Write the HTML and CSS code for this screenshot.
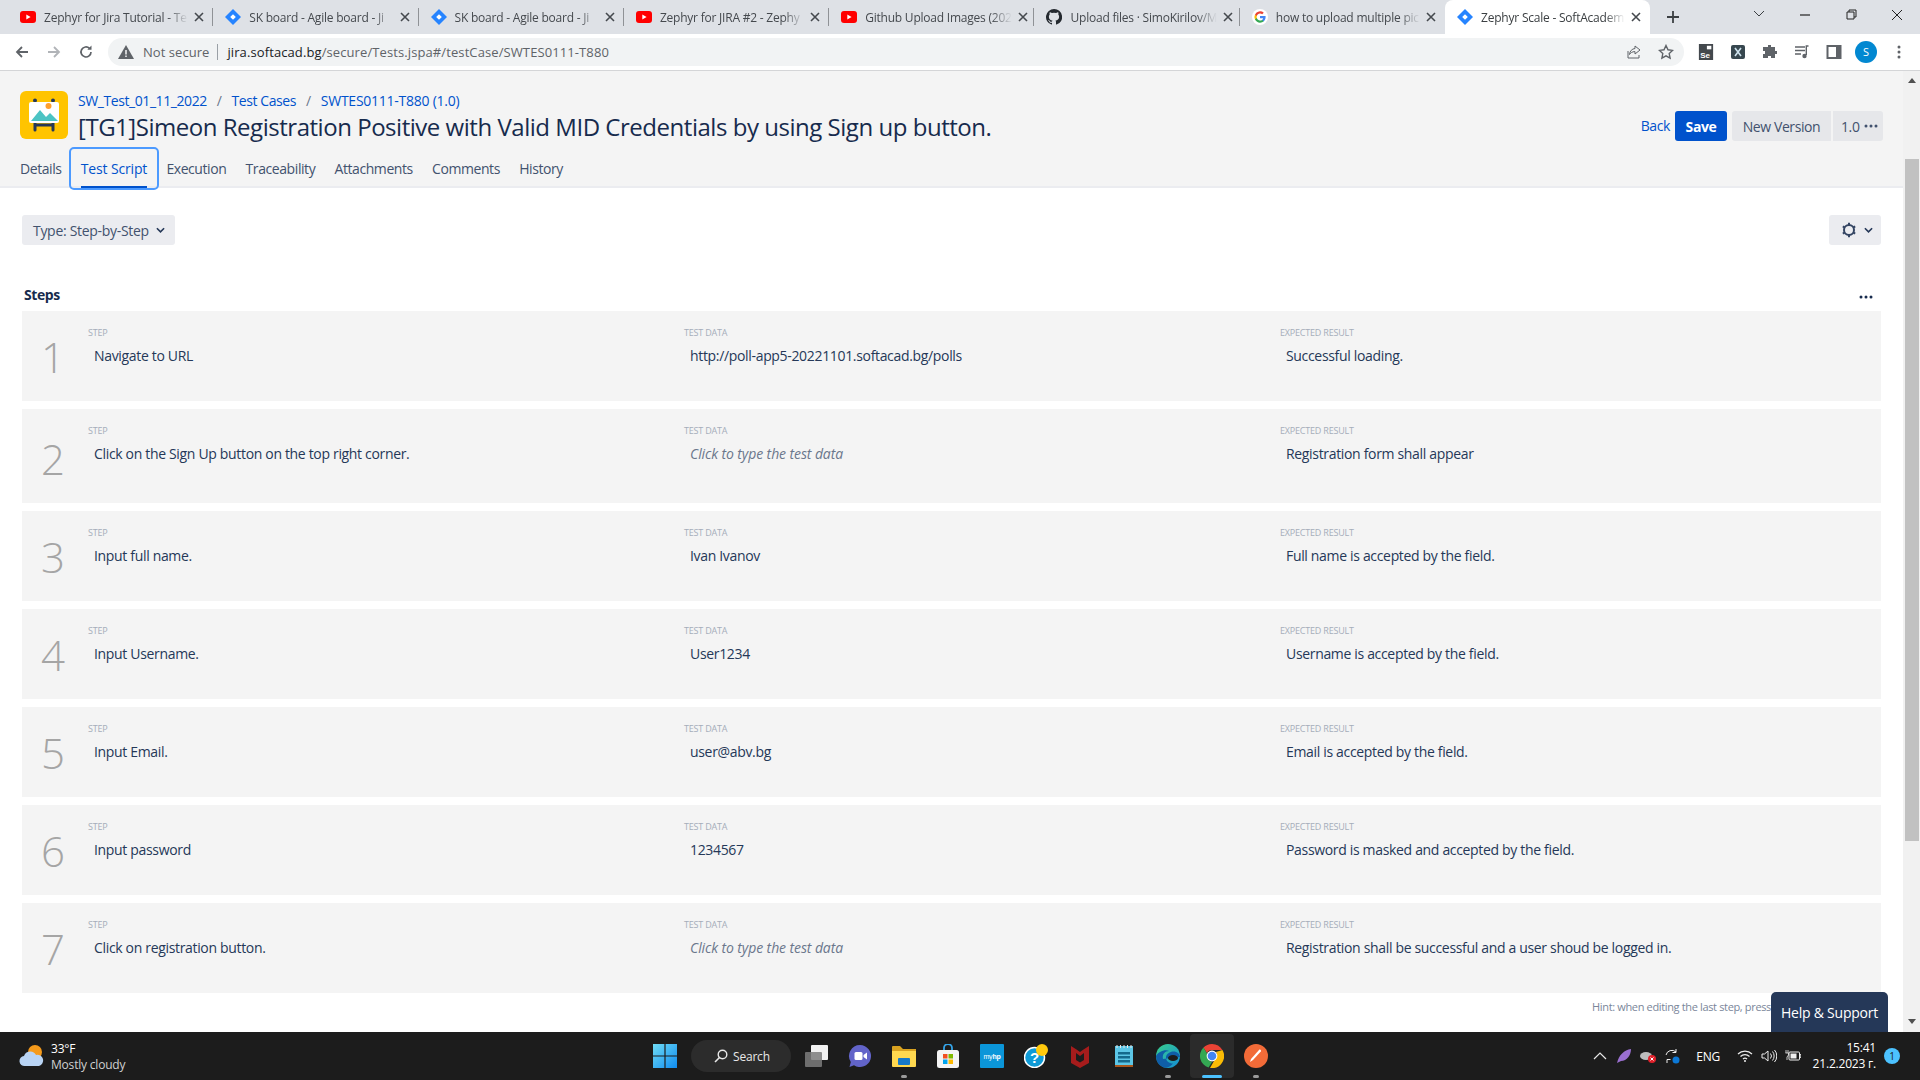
FILE: index.html
```html
<!DOCTYPE html>
<html lang="en">
<head>
<meta charset="utf-8">
<title>Zephyr Scale - SoftAcademy</title>
<link rel="stylesheet" href="styles.css">
</head>
<body>
<svg class="defs" width="0" height="0" aria-hidden="true">
  <symbol id="yt" viewBox="0 0 16 12"><rect width="16" height="12" rx="3" fill="#f00"/><path d="M6.3 3.4v5.2L10.6 6z" fill="#fff"/></symbol>
  <symbol id="jira" viewBox="0 0 16 16"><path d="M8 0l8 8-8 8-8-8z" fill="#2684ff"/><rect x="6" y="6" width="4" height="4" transform="rotate(45 8 8)" fill="#fff"/></symbol>
  <symbol id="close" viewBox="0 0 10 10"><path d="M1 1l8 8M9 1l-8 8" stroke="#45494e" stroke-width="1.6" fill="none"/></symbol>
  <symbol id="dots" viewBox="0 0 14 4"><circle cx="2" cy="2" r="1.500"/><circle cx="7" cy="2" r="1.500"/><circle cx="12" cy="2" r="1.500"/></symbol>
  <symbol id="gh" viewBox="0 0 16 16"><path fill="#24292f" d="M8 0a8 8 0 0 0-2.5 15.6c.4.1.5-.2.5-.4v-1.4c-2.2.5-2.7-1-2.7-1-.4-.9-.9-1.200-.9-1.200-.7-.5.100-.5.100-.5.800.1 1.200.8 1.200.8.700 1.200 1.900.9 2.300.7.100-.5.300-.9.500-1.100-1.800-.2-3.600-.9-3.600-4 0-.9.300-1.600.8-2.100-.1-.2-.4-1 .1-2.100 0 0 .7-.2 2.200.8a7.600 7.600 0 0 1 4 0c1.500-1 2.200-.8 2.200-.8.400 1.100.200 1.900.100 2.100.5.600.8 1.300.8 2.100 0 3.100-1.900 3.800-3.700 4 .3.300.6.800.6 1.500v2.200c0 .2.100.5.600.4A8 8 0 0 0 8 0z"/></symbol>
  <symbol id="goog" viewBox="0 0 16 16"><circle cx="8" cy="8" r="8" fill="#fff"/><path d="M13.600 8.100c0-.4 0-.8-.1-1.100H8v2.200h3.100c-.1.700-.5 1.300-1.100 1.700v1.400h1.900c1.100-1 1.700-2.500 1.700-4.200z" fill="#4285f4"/><path d="M8 13.700c1.500 0 2.800-.5 3.800-1.400L10 10.900c-.5.400-1.200.6-2 .6-1.500 0-2.700-1-3.200-2.400H3v1.400c1 1.900 2.900 3.200 5 3.200z" fill="#34a853"/><path d="M4.800 9.100c-.2-.7-.2-1.500 0-2.200V5.500H3a5.600 5.600 0 0 0 0 5z" fill="#fbbc05"/><path d="M8 4.500c.8 0 1.600.3 2.200.8l1.600-1.600A5.600 5.600 0 0 0 3 5.500l1.800 1.400C5.300 5.500 6.500 4.500 8 4.500z" fill="#ea4335"/></symbol>
</svg>

<div class="screen">
  <header class="tabstrip">
    <div class="tab sep"><svg class="fav"><use href="#yt"/></svg><span class="tab-title">Zephyr for Jira Tutorial - Te</span><svg class="tab-x"><use href="#close"/></svg></div>
    <div class="tab sep"><svg class="fav"><use href="#jira"/></svg><span class="tab-title">SK board - Agile board - Ji</span><svg class="tab-x"><use href="#close"/></svg></div>
    <div class="tab sep"><svg class="fav"><use href="#jira"/></svg><span class="tab-title">SK board - Agile board - Ji</span><svg class="tab-x"><use href="#close"/></svg></div>
    <div class="tab sep"><svg class="fav"><use href="#yt"/></svg><span class="tab-title">Zephyr for JIRA #2 - Zephy</span><svg class="tab-x"><use href="#close"/></svg></div>
    <div class="tab sep"><svg class="fav"><use href="#yt"/></svg><span class="tab-title">Github Upload Images (202</span><svg class="tab-x"><use href="#close"/></svg></div>
    <div class="tab sep"><svg class="fav"><use href="#gh"/></svg><span class="tab-title">Upload files · SimoKirilov/M</span><svg class="tab-x"><use href="#close"/></svg></div>
    <div class="tab"><svg class="fav"><use href="#goog"/></svg><span class="tab-title">how to upload multiple pic</span><svg class="tab-x"><use href="#close"/></svg></div>
    <div class="tab tab-active"><svg class="fav"><use href="#jira"/></svg><span class="tab-title">Zephyr Scale - SoftAcadem</span><svg class="tab-x"><use href="#close"/></svg></div>
    <svg class="newtab" viewBox="0 0 14 14"><path d="M7 1v12M1 7h12" stroke="#3c4043" stroke-width="1.800" fill="none"/></svg>
    <div class="winctl">
      <svg class="wc" viewBox="0 0 46 30"><path d="M18 11l5 5 5-5" stroke="#3c4043" fill="none"/></svg>
      <svg class="wc" viewBox="0 0 46 30"><path d="M18 15h10" stroke="#222" stroke-width="1.200" fill="none"/></svg>
      <svg class="wc" viewBox="0 0 46 30"><path d="M19 12h7v7h-7zM21 12v-2h7v7h-2" stroke="#222" fill="none"/></svg>
      <svg class="wc" viewBox="0 0 46 30"><path d="M18 10l10 10M28 10L18 20" stroke="#222" fill="none"/></svg>
    </div>
  </header>

  <nav class="toolbar">
    <svg class="nav-ic" viewBox="0 0 16 16"><path d="M14 8H3M8 3L3 8l5 5" stroke="#5f6368" stroke-width="1.800" fill="none"/></svg>
    <svg class="nav-ic" viewBox="0 0 16 16"><path d="M2 8h11M8 3l5 5-5 5" stroke="#b1b4b8" stroke-width="1.800" fill="none"/></svg>
    <svg class="nav-ic" viewBox="0 0 16 16"><path d="M13 8a5 5 0 1 1-1.500-3.600" stroke="#5f6368" stroke-width="1.700" fill="none"/><path d="M13.500 1.500v4.200H9.300z" fill="#5f6368"/></svg>
    <div class="omnibox">
      <svg class="warn" viewBox="0 0 16 14"><path d="M8 0l8 14H0z" fill="#5f6368"/><path d="M7.300 5h1.400v4.500H7.300zM7.300 10.500h1.400V12H7.300z" fill="#fff"/></svg>
      <span class="not-secure">Not secure</span>
      <span class="omni-sep"></span>
      <span class="url"><b>jira.softacad.bg</b>/secure/Tests.jspa#/testCase/SWTES0111-T880</span>
      <svg class="omni-ic" viewBox="0 0 16 16"><path d="M9 2l5 4-5 4V7.600C6 7.600 4.500 9 3.500 10.500 3.800 7 6 4.800 9 4.500zM2 7v7h11v-3" stroke="#5f6368" fill="none"/></svg>
      <svg class="omni-ic" viewBox="0 0 16 16"><path d="M8 1.500l2 4.300 4.600.6-3.400 3.200.9 4.600L8 11.900l-4.100 2.300.9-4.600L1.400 6.400 6 5.800z" stroke="#5f6368" stroke-width="1.400" fill="none"/></svg>
    </div>
    <div class="ext">
      <svg class="ext-ic" viewBox="0 0 16 18"><rect width="16" height="18" fill="#43484d"/><rect x="9" y="2" width="5" height="4" fill="#fff"/><text x="1.500" y="15.500" class="se">Se</text></svg>
      <svg class="ext-ic" viewBox="0 0 16 16"><rect x="1" y="1" width="14" height="14" rx="2" fill="#37474f"/><path d="M5 4l6 8M11 4l-6 8" stroke="#cfe3ee" stroke-width="1.600"/></svg>
      <svg class="ext-ic" viewBox="0 0 16 16"><path d="M6 1h3v2h4v4h2v3h-2v4H9v-2H6v2H1v-4h2V7H1V3h5z" fill="#5f6368"/></svg>
      <svg class="ext-ic" viewBox="0 0 16 16"><path d="M1 3h10M1 6.500h10M1 10h6" stroke="#5f6368" stroke-width="1.300"/><path d="M14.500 2h-2.200v9" stroke="#5f6368" stroke-width="1.400" fill="none"/><circle cx="10.500" cy="12" r="2.200" fill="#5f6368"/></svg>
      <svg class="ext-ic" viewBox="0 0 16 16"><path d="M1.500 2h13v12h-13z" fill="#fff" stroke="#5f6368" stroke-width="2"/><rect x="10" y="2" width="5" height="12" fill="#5f6368"/></svg>
      <span class="avatar">S</span>
      <svg class="ext-ic dots3" viewBox="0 0 4 16"><circle cx="2" cy="3" r="1.500" fill="#5f6368"/><circle cx="2" cy="8" r="1.500" fill="#5f6368"/><circle cx="2" cy="13" r="1.500" fill="#5f6368"/></svg>
    </div>
  </nav>

  <div class="viewport">
    <main class="app">
      <section class="page-head">
        <div class="head-top">
          <svg class="logo" viewBox="0 0 48 48">
            <rect width="48" height="48" rx="6" fill="#ffc400"/>
            <path d="M15 39V12M33 39V12" stroke="#253858" stroke-width="3" stroke-linecap="round"/>
            <path d="M15 34h18" stroke="#253858" stroke-width="3"/>
            <circle cx="15" cy="9.500" r="2" fill="#253858"/><circle cx="33" cy="9.500" r="2" fill="#253858"/>
            <rect x="9" y="11" width="30" height="21" rx="2" fill="#fff"/>
            <path d="M11 30l9-11 6 7 4-4 8 8z" fill="#4cc4c4"/>
            <circle cx="28.500" cy="15" r="3" fill="#ff9f2e"/>
          </svg>
          <div class="titles">
            <div class="crumbs"><a>SW_Test_01_11_2022</a><i>/</i><a>Test Cases</a><i>/</i><a class="crumb-key">SWTES0111-T880 (1.0)</a></div>
            <h1>[TG1]Simeon Registration Positive with Valid MID Credentials by using Sign up button.</h1>
          </div>
          <div class="actions">
            <a class="back">Back</a>
            <button class="btn btn-primary">Save</button>
            <button class="btn btn-version">New Version</button>
            <button class="btn btn-more">1.0 <svg class="dots-ic"><use href="#dots"/></svg></button>
          </div>
        </div>
        <div class="page-tabs">
          <a class="ptab">Details</a>
          <a class="ptab ptab-on">Test Script</a>
          <a class="ptab">Execution</a>
          <a class="ptab">Traceability</a>
          <a class="ptab">Attachments</a>
          <a class="ptab">Comments</a>
          <a class="ptab">History</a>
        </div>
      </section>

      <section class="content">
        <div class="type-row">
          <button class="btn btn-type">Type: Step-by-Step <svg class="chev" viewBox="0 0 10 6"><path d="M1 1l4 4 4-4" stroke="#253858" stroke-width="1.800" fill="none"/></svg></button>
          <button class="btn btn-gear">
            <svg class="gear" viewBox="0 0 16 16"><circle cx="8" cy="8" r="5" stroke="#344563" stroke-width="2" fill="none"/><path d="M8 .8v2.400M8 12.800v2.400M1.800 4.400l2 1.200M12.200 10.400l2 1.200M1.800 11.600l2-1.200M12.200 5.600l2-1.200" stroke="#344563" stroke-width="2"/></svg>
            <svg class="chev" viewBox="0 0 10 6"><path d="M1 1l4 4 4-4" stroke="#253858" stroke-width="1.800" fill="none"/></svg>
          </button>
        </div>
        <div class="steps-head"><h2>Steps</h2><svg class="dots-ic steps-dots"><use href="#dots"/></svg></div>
        <div class="steps">
          <article class="step">
            <div class="num">1</div>
            <div class="cell"><div class="lbl">Step</div><div class="val">Navigate to URL</div></div>
            <div class="cell"><div class="lbl">Test data</div><div class="val">http://poll-app5-20221101.softacad.bg/polls</div></div>
            <div class="cell"><div class="lbl">Expected result</div><div class="val">Successful loading.</div></div>
          </article>
          <article class="step step-tall">
            <div class="num">2</div>
            <div class="cell"><div class="lbl">Step</div><div class="val">Click on the Sign Up button on the top right corner.</div></div>
            <div class="cell"><div class="lbl">Test data</div><div class="val ph">Click to type the test data</div></div>
            <div class="cell"><div class="lbl">Expected result</div><div class="val">Registration form shall appear</div></div>
          </article>
          <article class="step">
            <div class="num">3</div>
            <div class="cell"><div class="lbl">Step</div><div class="val">Input full name.</div></div>
            <div class="cell"><div class="lbl">Test data</div><div class="val">Ivan Ivanov</div></div>
            <div class="cell"><div class="lbl">Expected result</div><div class="val">Full name is accepted by the field.</div></div>
          </article>
          <article class="step">
            <div class="num">4</div>
            <div class="cell"><div class="lbl">Step</div><div class="val">Input Username.</div></div>
            <div class="cell"><div class="lbl">Test data</div><div class="val">User1234</div></div>
            <div class="cell"><div class="lbl">Expected result</div><div class="val">Username is accepted by the field.</div></div>
          </article>
          <article class="step">
            <div class="num">5</div>
            <div class="cell"><div class="lbl">Step</div><div class="val">Input Email.</div></div>
            <div class="cell"><div class="lbl">Test data</div><div class="val">user@abv.bg</div></div>
            <div class="cell"><div class="lbl">Expected result</div><div class="val">Email is accepted by the field.</div></div>
          </article>
          <article class="step">
            <div class="num">6</div>
            <div class="cell"><div class="lbl">Step</div><div class="val">Input password</div></div>
            <div class="cell"><div class="lbl">Test data</div><div class="val">1234567</div></div>
            <div class="cell"><div class="lbl">Expected result</div><div class="val">Password is masked and accepted by the field.</div></div>
          </article>
          <article class="step">
            <div class="num">7</div>
            <div class="cell"><div class="lbl">Step</div><div class="val">Click on registration button.</div></div>
            <div class="cell"><div class="lbl">Test data</div><div class="val ph">Click to type the test data</div></div>
            <div class="cell"><div class="lbl">Expected result</div><div class="val">Registration shall be successful and a user shoud be logged in.</div></div>
          </article>
        </div>
        <div class="hint">Hint: when editing the last step, press</div>
      </section>
    </main>
    <aside class="scrollbar">
      <svg class="sb-arrow sb-up" viewBox="0 0 8 5"><path d="M0 5l4-5 4 5z" fill="#505050"/></svg>
      <div class="sb-thumb"></div>
      <svg class="sb-arrow sb-down" viewBox="0 0 8 5"><path d="M0 0l4 5 4-5z" fill="#505050"/></svg>
    </aside>
    <div class="help">Help &amp; Support</div>
  </div>

  <footer class="taskbar">
    <div class="weather">
      <svg class="weather-ic" viewBox="0 0 26 24"><circle cx="16" cy="8" r="7" fill="#f59a1b"/><path d="M6 22a5 5 0 0 1-1-10 6.500 6.500 0 0 1 12-1 5.500 5.500 0 0 1 3 11z" fill="#b9d4f4"/></svg>
      <div class="weather-txt"><div class="w1">33°F</div><div class="w2">Mostly cloudy</div></div>
    </div>
    <div class="dock">
      <span class="dk"><svg class="dk-ic" viewBox="0 0 24 24"><defs><linearGradient id="w" x1="0" y1="0" x2="1" y2="1"><stop offset="0" stop-color="#6fdcf5"/><stop offset="1" stop-color="#0f8bf0"/></linearGradient></defs><path d="M0 0h11.400v11.400H0zM12.600 0H24v11.400H12.600zM0 12.600h11.400V24H0zM12.600 12.600H24V24H12.600z" fill="url(#w)"/></svg></span>
      <span class="search"><svg class="search-ic" viewBox="0 0 14 14"><circle cx="8.500" cy="5.500" r="4.300" stroke="#e8e8e8" stroke-width="1.400" fill="none"/><path d="M5.500 8.500L1 13" stroke="#e8e8e8" stroke-width="1.600"/></svg>Search</span>
      <span class="dk"><svg class="dk-ic" viewBox="0 0 24 24"><rect x="7" y="1" width="17" height="15" rx="1" fill="#f2f2f2"/><rect x="1" y="8" width="17" height="15" rx="1" fill="#7d7d7d" opacity=".85"/></svg></span>
      <span class="dk"><svg class="dk-ic" viewBox="0 0 24 24"><path d="M12 1a11 11 0 1 1-6 20.200L1.500 23l1.300-5A11 11 0 0 1 12 1z" fill="#6264c9"/><rect x="6.500" y="8" width="8" height="8" rx="1.500" fill="#fff"/><path d="M15.500 11l3.500-2.500v7L15.500 13z" fill="#fff"/></svg></span>
      <span class="dk on"><svg class="dk-ic" viewBox="0 0 24 24"><path d="M0 3a1 1 0 0 1 1-1h7l3 3h13v4H0z" fill="#d9a220"/><path d="M0 7h24v15a1 1 0 0 1-1 1H1a1 1 0 0 1-1-1z" fill="#ffd84f"/><rect x="6" y="14" width="12" height="7" rx="1" fill="#1679c9"/></svg></span>
      <span class="dk"><svg class="dk-ic" viewBox="0 0 24 24"><path d="M8 7V4a4 4 0 0 1 8 0v3" stroke="#35a4e8" stroke-width="1.800" fill="none"/><rect x="1" y="6" width="22" height="18" rx="2.500" fill="#f4f4f4"/><rect x="7" y="10" width="4.500" height="4.500" fill="#f25022"/><rect x="12.500" y="10" width="4.500" height="4.500" fill="#7fba00"/><rect x="7" y="15.500" width="4.500" height="4.500" fill="#00a4ef"/><rect x="12.500" y="15.500" width="4.500" height="4.500" fill="#ffb900"/></svg></span>
      <span class="dk"><svg class="dk-ic" viewBox="0 0 24 24"><rect width="24" height="24" rx="1" fill="#0b96d9"/><text x="12" y="15" class="hp">my<tspan font-weight="700">hp</tspan></text></svg></span>
      <span class="dk"><svg class="dk-ic" viewBox="0 0 24 24"><circle cx="10.500" cy="13.500" r="10" fill="#0f9bd7" stroke="#fff" stroke-width="1.500"/><text x="10.500" y="19" class="q">?</text><circle cx="18" cy="6" r="6" fill="#ffc90d"/></svg></span>
      <span class="dk"><svg class="dk-ic" viewBox="0 0 24 24"><path d="M3 2l5.500 3.500L12 8l3.500-2.500L21 2v17l-9 5-9-5z" fill="#a61c1c"/><path d="M8 9l4 3 4-3v7l-4 2.500L8 16z" fill="#1c1c1c"/></svg></span>
      <span class="dk"><svg class="dk-ic" viewBox="0 0 24 24"><path d="M3 2h18v20H3z" fill="#5cc6e6"/><path d="M3 21h18v2H3z" fill="#a8561c"/><path d="M6 8h12v2.500H6zM6 12h12v2.500H6zM6 16h12v2.500H6z" fill="#14698c"/><path d="M5 1v3M8.500 1v3M12 1v3M15.500 1v3M19 1v3" stroke="#e8e8e8"/></svg></span>
      <span class="dk on"><svg class="dk-ic" viewBox="0 0 24 24"><defs><linearGradient id="e" x1="0" y1="0" x2="1" y2="1"><stop offset="0" stop-color="#39d08a"/><stop offset="1" stop-color="#138cd8"/></linearGradient></defs><circle cx="12" cy="12" r="12" fill="url(#e)"/><path d="M24 13c0-3-3-5.500-6.500-5.500S10 10 10 13.500s3 6 7 6c-3 4-7 4.500-9 4C3 22 0 17.500 0 12 2 8 9 5 13 7c-4 0-7 3-6 8" fill="#0f5ea8"/><ellipse cx="17" cy="14" rx="5" ry="3" fill="#1c1c1c"/></svg></span>
      <span class="dk dk-chrome"><svg class="dk-ic" viewBox="0 0 24 24"><path d="M12 0a12 12 0 0 1 10.400 6H12a6 6 0 0 0-5.200 3L3.500 3.500A12 12 0 0 1 12 0z" fill="#ea4335"/><path d="M3.500 3.500L8.700 12.500A4 4 0 0 0 12 18l-3.400 5.500A12 12 0 0 1 3.500 3.500z" fill="#34a853"/><path d="M22.400 6A12 12 0 0 1 10 23.900L15.200 15A6 6 0 0 0 16 8z" fill="#fbbc05"/><circle cx="12" cy="12" r="5.400" fill="#fff"/><circle cx="12" cy="12" r="4.300" fill="#4285f4"/></svg></span>
      <span class="dk on"><svg class="dk-ic" viewBox="0 0 24 24"><circle cx="12" cy="12" r="12" fill="#f26b38"/><path d="M6 18l1-3 8-9c1-1 2.500 0 1.800 1.500L9 16z" fill="#fff"/></svg></span>
    </div>
    <div class="tray">
      <svg class="tr-chev" viewBox="0 0 14 8"><path d="M1 7l6-6 6 6" stroke="#e8e8e8" stroke-width="1.200" fill="none"/></svg>
      <svg class="tr-ic" viewBox="0 0 16 16"><path d="M1 15C3 7 8 2 15 1c0 6-4 12-10 12z" fill="#9a6fd0"/></svg>
      <svg class="tr-ic" viewBox="0 0 16 16"><ellipse cx="6" cy="8" rx="6" ry="4" fill="#bdbdbd"/><circle cx="12" cy="11" r="4" fill="#e0202a"/><path d="M10.500 9.500l3 3M13.500 9.500l-3 3" stroke="#fff"/></svg>
      <svg class="tr-ic" viewBox="0 0 16 16"><path d="M2 7a6 6 0 0 1 10-3M12 1v3.500H8.500M3 15v-3.500h3.500" stroke="#eee" fill="none"/><circle cx="12" cy="12" r="3.500" fill="#0c78d6"/></svg>
      <span class="lang">ENG</span>
      <svg class="tr-ic" viewBox="0 0 16 12"><path d="M1 4a10 10 0 0 1 14 0M3.500 6.500a6.500 6.500 0 0 1 9 0M6 9a3 3 0 0 1 4 0" stroke="#eee" stroke-width="1.200" fill="none"/><circle cx="8" cy="11" r="1" fill="#eee"/></svg>
      <svg class="tr-ic" viewBox="0 0 16 16"><path d="M1 6v4h2.500L7 13V3L3.500 6z" stroke="#eee" fill="none"/><path d="M9.500 5.500a4 4 0 0 1 0 5M11.500 3.500a7 7 0 0 1 0 9M13.500 2a9 9 0 0 1 0 12" stroke="#eee" fill="none"/></svg>
      <svg class="tr-ic" viewBox="0 0 16 12"><rect x="4" y="2" width="10.500" height="8" rx="1" stroke="#eee" fill="none"/><rect x="5.500" y="3.500" width="6" height="5" fill="#eee"/><path d="M15 4.500h1v3h-1zM1 0v3M3 0v3M.5 3h3v2L2 7v3" stroke="#eee" stroke-width=".8" fill="none"/></svg>
      <div class="clock"><div>15:41</div><div>21.2.2023 г.</div></div>
      <span class="notif">1</span>
    </div>
  </footer>
</div>
</body>
</html>
```

FILE: styles.css
```css
* { box-sizing: border-box; }
html, body { margin: 0; height: 100%; overflow: hidden; }
body { font-family: "Open Sans", "Noto Sans", sans-serif; color: #172b4d; background: #fff; }
.defs { position: absolute; }
.screen { display: flex; flex-direction: column; width: 1920px; height: 1080px; }
button { font: inherit; border: 0; }

/* tab strip */
.tabstrip { display: flex; align-items: flex-end; height: 34px; padding-left: 8px; background: #dee1e6; font-size: 12px; letter-spacing: -.22px; flex: none; }
.tab { position: relative; display: flex; align-items: center; width: 205.3px; height: 34px; padding: 0 3px 0 12px; color: #45494e; flex: none; }
.tab.sep::after { content: ""; position: absolute; right: 0; top: 8px; height: 18px; width: 1px; background: #8f9296; }
.tab-active { background: #fff; border-radius: 8px 8px 0 0; color: #3c4043; }
.fav { width: 16px; height: 16px; flex: none; margin-right: 8px; }
.tab-title { flex: 1; white-space: nowrap; -webkit-mask-image: linear-gradient(90deg, #000 86%, transparent 100%); mask-image: linear-gradient(90deg, #000 86%, transparent 100%); }
.tab-x { width: 10px; height: 10px; flex: none; margin: 0 6px 0 6px; }
.newtab { width: 14px; height: 14px; margin: 0 0 10px 16px; flex: none; }
.winctl { display: flex; margin-left: auto; align-self: flex-start; }
.wc { width: 46px; height: 30px; }

/* toolbar */
.toolbar { display: flex; align-items: center; height: 37px; padding: 0 0 1px 14px; background: #fff; border-bottom: 1px solid #d4d5d7; flex: none; }
.nav-ic { width: 16px; height: 16px; margin-right: 16px; flex: none; }
.omnibox { display: flex; align-items: center; width: 1576px; height: 28px; margin-left: -2px; padding-left: 10px; border-radius: 14px; background: #f1f3f4; font-size: 13px; color: #5f6368; }
.warn { width: 16px; height: 14px; margin-right: 9px; }
.not-secure { color: #5f6368; letter-spacing: .05px; }
.omni-sep { width: 1px; height: 16px; margin: 0 9px 0 8px; background: #9aa0a6; }
.url { flex: 1; white-space: nowrap; letter-spacing: .1px; }
.url b { font-weight: 400; color: #202124; }
.omni-ic { width: 16px; height: 16px; margin-right: 16px; flex: none; }
.omni-ic:last-child { margin-right: 10px; }
.ext { display: flex; align-items: center; margin-left: 14px; gap: 16px; }
.ext-ic { width: 16px; height: 16px; flex: none; }
.se { font: 700 9px "Liberation Sans", sans-serif; fill: #fff; }
.avatar { display: grid; place-items: center; width: 22px; height: 22px; border-radius: 50%; background: #0288d1; color: #fff; font-size: 11px; margin-left: -3px; margin-right: -3px; }
.dots3 { width: 4px; margin-left: 7px; }

/* viewport */
.viewport { position: relative; display: flex; flex: 1; min-height: 0; }
.app { display: flex; flex-direction: column; width: 1903px; flex: none; }
.page-head { background: #f4f4f4; border-bottom: 2px solid #ebecf0; flex: none; }
.head-top { display: flex; height: 78px; padding: 20px 20px 0 20px; }
.logo { width: 48px; height: 48px; flex: none; }
.titles { margin-left: 10px; }
.crumbs { display: flex; gap: 9px; height: 20px; font-size: 14px; line-height: 20px; letter-spacing: -.42px; }
.crumbs a { color: #0052cc; }
.crumbs .crumb-key { letter-spacing: -.25px; }
.crumbs i { font-style: normal; color: #6b778c; padding: 0 1px; }
h1 { margin: 1px 0 0; font-size: 24px; line-height: 30px; font-weight: 500; letter-spacing: -.47px; color: #172b4d; white-space: nowrap; }
.actions { display: flex; align-items: flex-start; margin-left: auto; padding-top: 20px; font-size: 14px; letter-spacing: -.4px; }
.back { height: 30px; line-height: 30px; margin-right: 5px; color: #0052cc; }
.btn { height: 30px; padding: 0 11px; border-radius: 3px; background: #e6e7ea; color: #42526e; letter-spacing: -.4px; font-size: 14px; display: flex; align-items: center; }
.btn-primary { width: 52px; justify-content: center; background: #0052cc; color: #fff; font-weight: 700; margin-right: 5px; padding: 0; }
.btn-version { width: 99px; justify-content: center; padding: 0; border-radius: 3px 0 0 3px; margin-right: 2px; }
.btn-more { width: 50px; padding: 0 0 0 8px; border-radius: 0 3px 3px 0; gap: 4px; }
.dots-ic { width: 14px; height: 4px; flex: none; fill: #42526e; }

.page-tabs { display: flex; height: 37px; padding-left: 10.4px; font-size: 14px; letter-spacing: -.42px; }
.ptab { display: flex; align-items: flex-start; height: 39px; padding: 10px 9.6px 0; color: #42526e; }
.ptab-on { position: relative; color: #0052cc; outline: 2px solid #4c9aff; outline-offset: 0; border-radius: 3px; font-weight: 500; letter-spacing: -.15px; }
.ptab-on::after { content: ""; position: absolute; left: 9.6px; right: 9.6px; bottom: 0; height: 2px; background: #0052cc; }

/* content */
.content { flex: 1; min-height: 0; padding: 27px 22px 0; overflow: hidden; }
.type-row { display: flex; justify-content: space-between; }
.btn-type { width: 153px; padding: 0 0 0 11px; gap: 7px; background: #ebecf0; letter-spacing: -.3px; }
.btn-gear { width: 52px; padding: 0 0 0 12px; gap: 7px; background: #ebecf0; }
.chev { width: 9px; height: 6px; flex: none; }
.gear { width: 16px; height: 16px; flex: none; }
.steps-head { display: flex; justify-content: space-between; align-items: flex-end; height: 66px; padding: 0 8px 6px 2px; }
h2 { margin: 0; font-size: 14px; line-height: 20px; font-weight: 700; letter-spacing: -.4px; color: #172b4d; }
.steps-dots { fill: #172b4d; margin-bottom: 6px; }
.steps { display: flex; flex-direction: column; gap: 8px; }
.step { display: grid; grid-template-columns: 66px 596px 596px 1fr; min-height: 90px; background: #f4f4f4; }
.step-tall { min-height: 94px; }
.step-tall .num { padding-top: 6px; }
.num { align-self: center; padding-top: 2px; text-align: center; padding-right: 4px; font-size: 42px; line-height: 50px; font-weight: 300; color: #a5a5a5; }
.cell { padding-top: 15px; }
.lbl { height: 14px; font-size: 9px; line-height: 14px; text-transform: uppercase; letter-spacing: -.2px; color: #a5adba; }
.val { margin-top: 5.5px; padding-left: 6px; font-size: 14px; line-height: 20px; letter-spacing: -.33px; color: #253858; }
.ph { font-style: italic; color: #6b778c; letter-spacing: -.1px; }
.hint { margin: 7px 110px 0 0; text-align: right; font-size: 11px; line-height: 14px; letter-spacing: -.35px; color: #7a869a; white-space: nowrap; }

/* scrollbar */
.scrollbar { position: relative; display: flex; flex-direction: column; align-items: center; width: 17px; background: #f1f1f1; flex: none; }
.sb-arrow { width: 8px; height: 5px; flex: none; }
.sb-up { margin-top: 7px; }
.sb-thumb { width: 14px; height: 682px; margin-top: 76px; background: #c1c1c1; }
.sb-down { margin-top: auto; margin-bottom: 8px; }

.help { position: absolute; right: 32px; bottom: 0; width: 117px; height: 40px; padding-top: 11px; background: #253858; border-radius: 5px 5px 0 0; color: #fff; font-size: 14px; line-height: 20px; text-align: center; letter-spacing: -.22px; }

/* taskbar */
.taskbar { display: flex; align-items: center; height: 48px; background: #1c1c1c; color: #fff; flex: none; font-size: 12px; letter-spacing: -.2px; }
.weather { display: flex; align-items: center; width: 643px; padding-left: 19px; flex: none; }
.weather-ic { width: 26px; height: 24px; margin-right: 6px; flex: none; }
.weather-txt { line-height: 16px; padding-top: 2px; }
.w2 { color: #d0d0d0; }
.dock { display: flex; align-items: center; height: 48px; }
.dk { position: relative; display: grid; place-items: center; width: 44px; height: 44px; }
.dk-ic { width: 24px; height: 24px; }
.dk.on::after { content: ""; position: absolute; left: 19px; bottom: 0; width: 6px; height: 3px; border-radius: 2px; background: #9a9a9a; }
.dk-chrome { border-radius: 4px; background: #2b2b2b; }
.dk-chrome::after { content: ""; position: absolute; left: 12px; bottom: 0; width: 20px; height: 3px; border-radius: 2px; background: #4cc2ff; }
.search { display: flex; align-items: center; width: 100px; height: 32px; margin: 0 3px 0 4px; padding-left: 23px; gap: 5px; border-radius: 16px; background: #2c2c2c; color: #e8e8e8; font-size: 12px; }
.search-ic { width: 14px; height: 14px; }
.hp { font: 7px "Liberation Sans", sans-serif; fill: #fff; text-anchor: middle; }
.q { font: 700 15px "Liberation Sans", sans-serif; fill: #fff; text-anchor: middle; }
.tray { display: flex; align-items: center; margin-left: auto; padding-right: 20px; gap: 8px; }
.tr-chev { width: 14px; height: 8px; margin-right: 1px; }
.tr-ic { width: 16px; height: 16px; flex: none; }
.lang { margin: 0 9px 0 8px; font-size: 12px; }
.clock { width: 67px; text-align: right; line-height: 16px; white-space: nowrap; }
.notif { display: grid; place-items: center; width: 16px; height: 16px; border-radius: 50%; background: #4cc2ff; color: #1c1c1c; font-size: 10px; }
```
